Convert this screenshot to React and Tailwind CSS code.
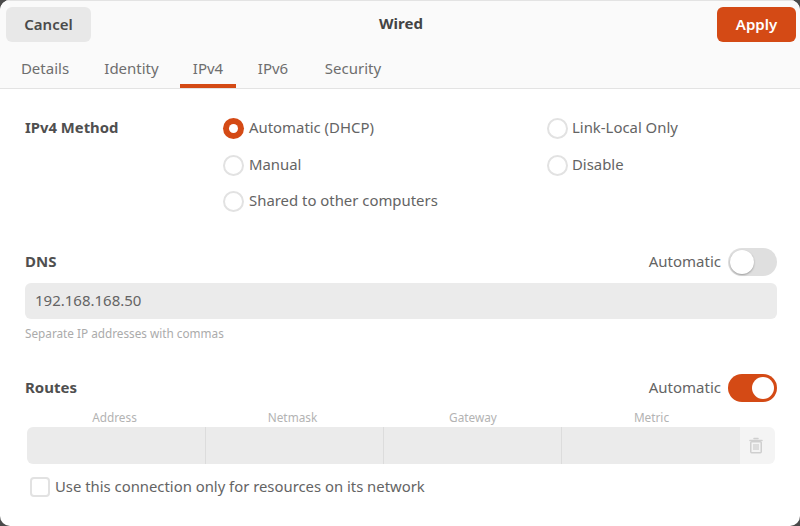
import React from "react";

const font = "font-['Noto_Sans','Open_Sans',sans-serif]";

function Radio({ checked, label, right }) {
  return (
    <div className="flex items-center h-[21px]">
      {checked ? (
        <span className="w-[21px] h-[21px] rounded-full bg-[#d44a15] flex items-center justify-center shrink-0">
          <span className="w-[9px] h-[9px] rounded-full bg-white" />
        </span>
      ) : (
        <span className="w-[21px] h-[21px] rounded-full border-2 border-[#e2e2e2] bg-white shrink-0" />
      )}
      <span className={`${right ? "ml-[4px]" : "ml-[5px]"} pb-[2px] text-[14.9px] text-[#646464] whitespace-nowrap`}>{label}</span>
    </div>
  );
}

function Toggle({ on }) {
  return on ? (
    <span className="w-[49px] h-[28px] rounded-full bg-[#d44a15] flex items-center justify-end pr-[3px]">
      <span className="w-[22px] h-[22px] rounded-full bg-white" />
    </span>
  ) : (
    <span className="w-[49px] h-[28px] rounded-full bg-[#dfdfdf] flex items-center pl-[2px]">
      <span className="w-[24px] h-[24px] rounded-full bg-white shadow-[0_1px_2px_rgba(0,0,0,0.3)]" />
    </span>
  );
}

function Tab({ label, active, className }) {
  return (
    <div className={`h-full flex items-start pt-[10px] justify-center border-b-4 ${active ? "border-[#d44a15]" : "border-transparent"} ${className}`}>
      <span className="text-[15px] text-[#6e6e6e] leading-[20px]">{label}</span>
    </div>
  );
}

export default function App() {
  return (
    <div className={`w-[800px] h-[526px] bg-[#4a4a4a] overflow-hidden ${font}`}>
      <div className="w-full h-full rounded-[10px] overflow-hidden bg-white flex flex-col">
        <header className="h-[89px] shrink-0 bg-[#fafafa] border-b border-t border-[#e3e3e3] flex flex-col">
          <div className="h-[47px] shrink-0 pt-[6px] pl-[6px] pr-[4px] grid grid-cols-[1fr_auto_1fr] items-start">
            <button className="justify-self-start w-[85px] h-[35px] rounded-[6px] bg-[#e8e8e8] text-[15px] font-semibold text-[#4a4a4a]">Cancel</button>
            <span className="text-[15px] font-bold text-[#444444] mt-[6px] leading-[20px]">Wired</span>
            <button className="justify-self-end w-[79px] h-[35px] rounded-[6px] bg-[#d44a15] text-[15px] font-semibold text-white">Apply</button>
          </div>
          <nav className="flex-1 flex items-stretch pl-[7px] min-h-0">
            <Tab label="Details" className="w-[76px]" />
            <Tab label="Identity" className="w-[97px]" />
            <Tab label="IPv4" active className="w-[56px]" />
            <Tab label="IPv6" className="w-[74px]" />
            <Tab label="Security" className="w-[86px]" />
          </nav>
        </header>

        <main className="flex-1 flex flex-col pl-[25px] pr-[23px] pt-[29px]">
          <section className="flex h-[130px]">
            <span className="w-[198px] text-[14.85px] font-bold text-[#4f4f4f] leading-[19px] shrink-0">IPv4 Method</span>
            <div className="w-[324px] flex flex-col gap-[15.5px] shrink-0">
              <Radio checked label="Automatic (DHCP)" />
              <Radio label="Manual" />
              <Radio label="Shared to other computers" />
            </div>
            <div className="flex flex-col gap-[15.5px]">
              <Radio right label="Link-Local Only" />
              <Radio right label="Disable" />
            </div>
          </section>

          <section className="flex items-center justify-between h-[28px]">
            <span className="pb-[2px] text-[15px] font-bold text-[#4f4f4f]">DNS</span>
            <div className="flex items-center gap-[7px]">
              <span className="pb-[2px] text-[15px] text-[#646464]">Automatic</span>
              <Toggle />
            </div>
          </section>
          <div className="mt-[7px] h-[36px] rounded-[6px] bg-[#ebebeb] px-[10px] pb-[2px] flex items-center text-[15px] text-[#646464]">192.168.168.50</div>
          <p className="mt-[7px] text-[11.75px] leading-[15px] text-[#ababab]">Separate IP addresses with commas</p>

          <section className="mt-[33px] flex items-center justify-between h-[28px]">
            <span className="pb-[2px] text-[15px] font-bold text-[#4f4f4f]">Routes</span>
            <div className="flex items-center gap-[7px]">
              <span className="pb-[2px] text-[15px] text-[#646464]">Automatic</span>
              <Toggle on />
            </div>
          </section>

          <div className="mx-[2px] mt-[7px] flex text-[11.8px] leading-[16px] text-[#b3b3b3] text-center pr-[35px]">
            <span className="w-[175px]">Address</span>
            <span className="w-[181px]">Netmask</span>
            <span className="w-[180px]">Gateway</span>
            <span className="flex-1">Metric</span>
          </div>
          <div className="mx-[2px] mt-[2px] h-[37px] flex rounded-[6px] overflow-hidden">
            <div className="w-[179px] bg-[#ebebeb] border-r border-[#dcdcdc]" />
            <div className="w-[178px] bg-[#ebebeb] border-r border-[#dcdcdc]" />
            <div className="w-[178px] bg-[#ebebeb] border-r border-[#dcdcdc]" />
            <div className="flex-1 bg-[#ebebeb]" />
            <div className="w-[35px] bg-[#f4f4f4] pr-[3px] flex items-center justify-center">
              <svg width="14" height="17" viewBox="0 0 14 17" fill="none">
                <path d="M5 1.5h4M1 3.5h12" stroke="#cfcfcf" strokeWidth="1.5" strokeLinecap="round" />
                <rect x="1.75" y="4.75" width="10.5" height="11" rx="1" stroke="#cfcfcf" strokeWidth="1.5" />
                <rect x="4" y="7" width="6" height="6" fill="#dcdcdc" />
              </svg>
            </div>
          </div>

          <label className="ml-[5px] mt-[13px] flex items-center h-[20px]">
            <span className="w-[20px] h-[20px] rounded-[4px] border-2 border-[#e2e2e2] bg-white shrink-0" />
            <span className="ml-[5px] pb-[1px] text-[14.85px] text-[#646464] whitespace-nowrap">Use this connection only for resources on its network</span>
          </label>
        </main>
      </div>
    </div>
  );
}
